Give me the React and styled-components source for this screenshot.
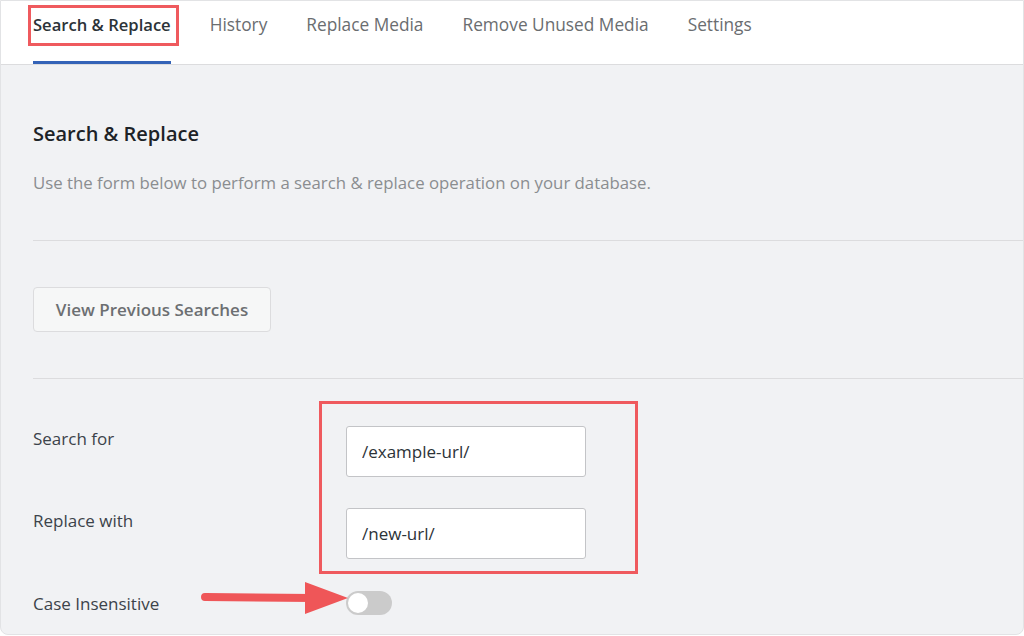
import styled, { createGlobalStyle } from "styled-components"

const GlobalStyle = createGlobalStyle`
    body {
        margin: 0;
        background: #ffffff;
        font-family: "Open Sans", "Noto Sans", sans-serif;
    }
`

const tabs = ["Search & Replace", "History", "Replace Media", "Remove Unused Media", "Settings"]

export default function App() {
    return (
        <>
            <GlobalStyle />
            <Frame>
                <TabBar>
                    {tabs.map((t, i) => (
                        <Tab key={t} active={i === 0}>
                            {t}
                            {i === 0 && <Highlight />}
                        </Tab>
                    ))}
                </TabBar>
                <Content>
                    <Heading>Search & Replace</Heading>
                    <Description>Use the form below to perform a search & replace operation on your database.</Description>
                    <Divider />
                    <ButtonSection>
                        <GhostButton>View Previous Searches</GhostButton>
                    </ButtonSection>
                    <Divider />
                    <Form>
                        <FieldsHighlight />
                        <Row>
                            <Label>Search for</Label>
                            <TextInput defaultValue="/example-url/" />
                        </Row>
                        <Row>
                            <Label>Replace with</Label>
                            <TextInput defaultValue="/new-url/" />
                        </Row>
                        <Row short>
                            <Label>Case Insensitive</Label>
                            <Toggle>
                                <Knob />
                            </Toggle>
                            <Arrow width="150" height="34" viewBox="0 0 150 34">
                                <line x1="4" y1="16" x2="112" y2="17" stroke="#ef5658" strokeWidth="8" strokeLinecap="round" />
                                <polygon points="104,1 147,17 104,33" fill="#ef5658" />
                            </Arrow>
                        </Row>
                    </Form>
                </Content>
            </Frame>
        </>
    )
}

const Frame = styled.div`
    width: 1024px;
    height: 635px;
    box-sizing: border-box;
    border: 1px solid #e2e3e5;
    border-radius: 0 0 8px 8px;
    overflow: hidden;
    background: #f1f2f4;
    display: flex;
    flex-direction: column;
`

const TabBar = styled.div`
    height: 63px;
    background: #ffffff;
    border-bottom: 1px solid #dcdcde;
    display: flex;
    padding-left: 32px;
    gap: 39px;
`

const Tab = styled.div`
    position: relative;
    height: 100%;
    box-sizing: border-box;
    padding-top: 12px;
    font-size: ${p => (p.active ? "16.6px" : "17.3px")};
    font-weight: ${p => (p.active ? 600 : 500)};
    color: ${p => (p.active ? "#2c3338" : "#6a6d70")};
    border-bottom: 3px solid ${p => (p.active ? "#3463b7" : "transparent")};
    white-space: nowrap;
`

const Highlight = styled.span`
    position: absolute;
    left: -5px;
    right: -8px;
    top: 4px;
    height: 41px;
    box-sizing: border-box;
    border: 3px solid #ef5a5e;
`

const Content = styled.div`
    flex: 1;
    padding: 55px 0 0 32px;
`

const Heading = styled.h2`
    margin: 0;
    font-size: 20px;
    line-height: 28px;
    font-weight: 600;
    color: #1d2327;
`

const Description = styled.p`
    margin: 24px 0 46px;
    font-size: 16.8px;
    line-height: 22px;
    color: #8a8d90;
`

const Divider = styled.hr`
    margin: 0;
    border: none;
    border-top: 1px solid #dcdcde;
`

const ButtonSection = styled.div`
    padding: 46px 0;
`

const GhostButton = styled.button`
    width: 238px;
    height: 45px;
    background: #f6f7f7;
    border: 1px solid #dcdcde;
    border-radius: 4px;
    font-family: "Open Sans", "Noto Sans", sans-serif;
    font-size: 17px;
    font-weight: 600;
    color: #6c6f72;
`

const Form = styled.div`
    position: relative;
    padding-top: 47px;
    display: flex;
    flex-direction: column;
    gap: 31px;
`

const FieldsHighlight = styled.div`
    position: absolute;
    left: 286px;
    top: 22px;
    width: 319px;
    height: 173px;
    box-sizing: border-box;
    border: 3px solid #ef5a5e;
`

const Row = styled.div`
    position: relative;
    display: grid;
    grid-template-columns: 313px auto;
    align-items: ${p => (p.short ? "center" : "start")};
    height: ${p => (p.short ? "26px" : "51px")};
`

const Label = styled.div`
    font-size: 17px;
    font-weight: 500;
    color: #3c434a;
    padding-top: 1px;
`

const TextInput = styled.input`
    width: 240px;
    height: 51px;
    box-sizing: border-box;
    padding: 0 15px;
    background: #ffffff;
    border: 1px solid #c3c4c7;
    border-radius: 3px;
    font-family: "Open Sans", "Noto Sans", sans-serif;
    font-size: 17px;
    color: #2c3338;
`

const Toggle = styled.div`
    width: 46px;
    height: 24px;
    border-radius: 12px;
    background: #cbcbcb;
    display: flex;
    align-items: center;
    padding-left: 2px;
    box-sizing: border-box;
`

const Knob = styled.div`
    width: 20px;
    height: 20px;
    border-radius: 50%;
    background: #ffffff;
`

const Arrow = styled.svg`
    position: absolute;
    left: 168px;
    top: -9px;
`
